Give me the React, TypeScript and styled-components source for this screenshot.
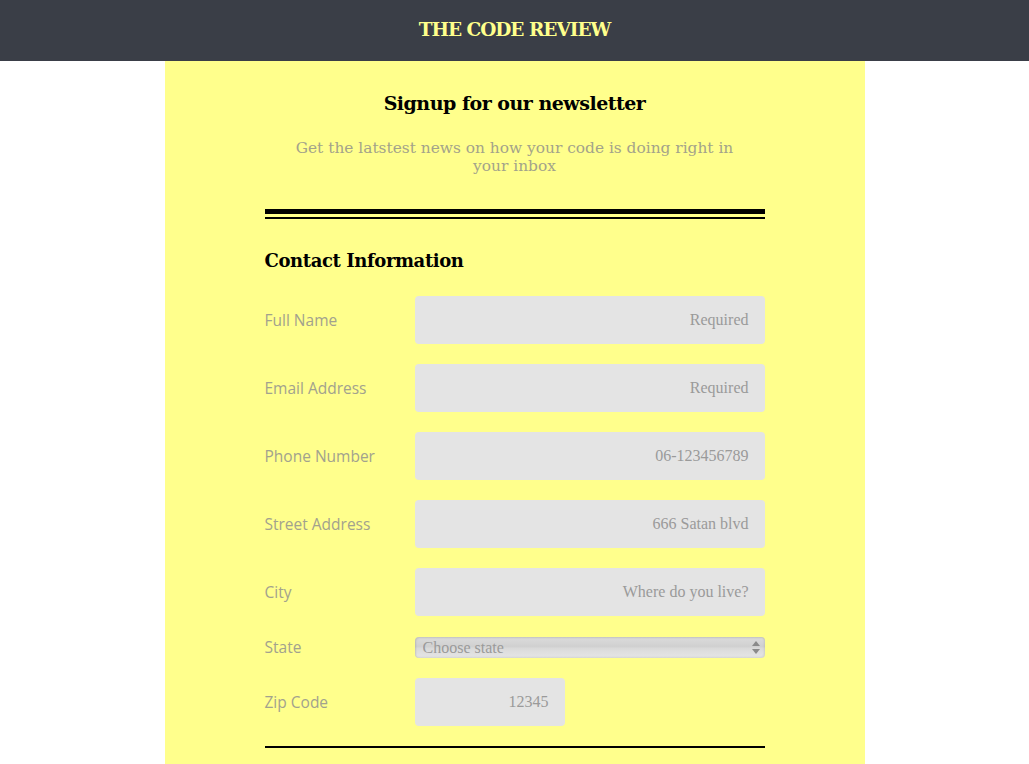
import styled, { createGlobalStyle } from "styled-components";

const GlobalStyle = createGlobalStyle`
html, body {
    margin: 0;
    padding: 0;
    background: #ffffff;
}
* {
    box-sizing: border-box;
}
`;

const Header = styled.header`
align-items: center;
background: #3a3e47;
display: flex;
height: 61px;
justify-content: center;
padding-bottom: 3px;
`;

const Brand = styled.h1`
color: #ffff8c;
font-family: "DejaVu Serif", serif;
font-size: 18.5px;
font-weight: 700;
letter-spacing: -1px;
margin: 0;
`;

const Page = styled.main`
background: #ffff8c;
margin: 0 auto;
padding: 31px 100px 40px;
width: 700px;
`;

const Title = styled.h2`
color: #000000;
font-family: "DejaVu Serif", serif;
font-size: 19px;
font-weight: 700;
letter-spacing: -0.5px;
margin: 0;
text-align: center;
`;

const Subtitle = styled.p`
color: #a3a38a;
font-family: "DejaVu Serif", serif;
font-size: 15.4px;
line-height: 18px;
margin: 25px auto 0;
max-width: 450px;
text-align: center;
`;

const DoubleRule = styled.div`
border-bottom: 2px solid #000000;
border-top: 5px solid #000000;
height: 10px;
margin-top: 34px;
`;

const SectionTitle = styled.h3`
color: #000000;
font-family: "DejaVu Serif", serif;
font-size: 18px;
font-weight: 700;
letter-spacing: -0.4px;
margin: 31px 0 25px;
`;

const Form = styled.form`
display: flex;
flex-direction: column;
gap: 20px;
`;

const Row = styled.div`
align-items: center;
display: flex;
`;

const Label = styled.label`
color: #a2a28e;
flex: 0 0 150px;
font-family: "Open Sans", sans-serif;
font-size: 15.5px;
font-weight: 400;
`;

const Input = styled.input<{ $width?: number }>`
background: #e4e4e4;
border: none;
border-radius: 4px;
color: #333333;
font-family: "Liberation Serif", serif;
font-size: 16px;
height: 48px;
outline: none;
padding: 0 16px;
text-align: right;
width: ${({ $width }) => ($width ? `${$width}px` : "350px")};

&::placeholder {
    color: #9a9a9a;
}
`;

const SelectWrap = styled.div`
position: relative;
width: 350px;
`;

const Select = styled.select`
appearance: none;
background: linear-gradient(#dcdcdc 0%, #d0d0d0 45%, #dadada 55%, #e6e6e6 100%);
border: none;
border-radius: 4px;
box-shadow: inset 1px 1px 2px rgba(0, 0, 0, 0.12), inset -1px -1px 2px rgba(0, 0, 0, 0.08);
color: #9a9a9a;
display: block;
font-family: "Liberation Serif", serif;
font-size: 16px;
height: 21px;
line-height: 21px;
outline: none;
padding: 0 20px 0 8px;
width: 100%;
`;

const Arrows = styled.svg`
pointer-events: none;
position: absolute;
right: 5px;
top: 4px;
`;

const BottomRule = styled.div`
border-top: 2px solid #000000;
margin-top: 20px;
`;

const fields = [
    { label: "Full Name", placeholder: "Required" },
    { label: "Email Address", placeholder: "Required" },
    { label: "Phone Number", placeholder: "06-123456789" },
    { label: "Street Address", placeholder: "666 Satan blvd" },
    { label: "City", placeholder: "Where do you live?" },
];

const App = () => {
    return (
        <>
            <GlobalStyle />
            <Header>
                <Brand>THE CODE REVIEW</Brand>
            </Header>
            <Page>
                <Title>Signup for our newsletter</Title>
                <Subtitle>Get the latstest news on how your code is doing right in your inbox</Subtitle>
                <DoubleRule />
                <SectionTitle>Contact Information</SectionTitle>
                <Form>
                    {fields.map((field) => (
                        <Row key={field.label}>
                            <Label>{field.label}</Label>
                            <Input placeholder={field.placeholder} />
                        </Row>
                    ))}
                    <Row>
                        <Label>State</Label>
                        <SelectWrap>
                            <Select defaultValue="">
                                <option value="" disabled>Choose state</option>
                            </Select>
                            <Arrows width="8" height="13" viewBox="0 0 8 13">
                                <path d="M4 0 L8 5 L0 5 Z" fill="#8a8a8a" />
                                <path d="M0 8 L8 8 L4 13 Z" fill="#8a8a8a" />
                            </Arrows>
                        </SelectWrap>
                    </Row>
                    <Row>
                        <Label>Zip Code</Label>
                        <Input $width={150} placeholder="12345" />
                    </Row>
                </Form>
                <BottomRule />
            </Page>
        </>
    );
};

export default App;
